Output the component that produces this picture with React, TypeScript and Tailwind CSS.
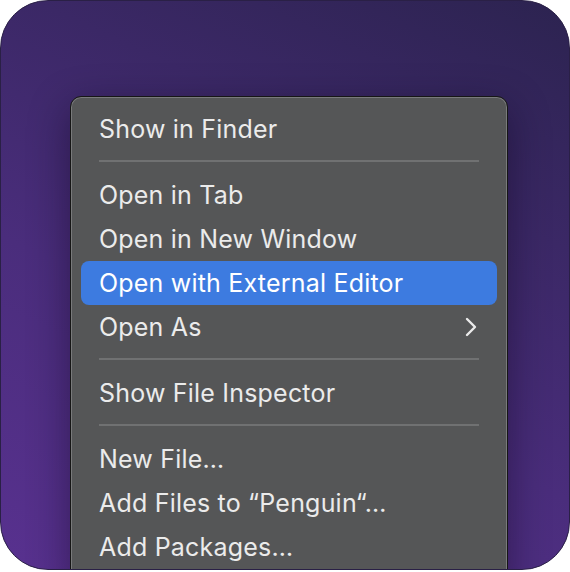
import React from "react";

type Item = { label: string; highlight?: boolean; submenu?: boolean } | "sep";

const items: Item[] = [
  { label: "Show in Finder" },
  "sep",
  { label: "Open in Tab" },
  { label: "Open in New Window" },
  { label: "Open with External Editor", highlight: true },
  { label: "Open As", submenu: true },
  "sep",
  { label: "Show File Inspector" },
  "sep",
  { label: "New File…" },
  { label: "Add Files to “Penguin“…" },
  { label: "Add Packages…" },
];

export default function App() {
  return (
    <div className="w-[570px] h-[572px] bg-white">
      <div
        className="w-[570px] h-[570px] rounded-[48px] border border-[#2a2046] overflow-hidden bg-[linear-gradient(25deg,#58318f_0%,#4a2d7c_40%,#3b2866_70%,#2c2350_100%)]"
        style={{ fontFamily: "Inter, 'Noto Sans', sans-serif" }}
      >
        <div className="pt-[95px] pl-[69px]">
          <div className="w-[438px] rounded-[11px] border border-[#161616] bg-[#555657] shadow-[inset_0_0_0_1px_#797a7b,0_12px_40px_rgba(10,5,25,0.45)] px-[10px] pt-[10px] pb-[20px]">
            {items.map((it, i) =>
              it === "sep" ? (
                <div key={i} className="h-[22px] pt-[9px] px-[18px]">
                  <div className="h-[2px] bg-[#707172]" />
                </div>
              ) : (
                <div
                  key={i}
                  className={
                    it.highlight
                      ? "h-[44px] rounded-[8px] bg-[#3d7be0] flex items-center justify-between pl-[18px] pr-[20px] text-[25px] text-white"
                      : "h-[44px] rounded-[8px] flex items-center justify-between pl-[18px] pr-[20px] text-[25px] text-[#ebebeb]"
                  }
                >
                  <span className="leading-none tracking-[0.2px]">{it.label}</span>
                  {it.submenu && (
                    <svg width="12" height="20" viewBox="0 0 12 20" fill="none">
                      <polyline
                        points="2,2 10,10 2,18"
                        stroke="#ebebeb"
                        strokeWidth="2.4"
                        strokeLinecap="round"
                        strokeLinejoin="round"
                      />
                    </svg>
                  )}
                </div>
              )
            )}
          </div>
        </div>
      </div>
    </div>
  );
}
